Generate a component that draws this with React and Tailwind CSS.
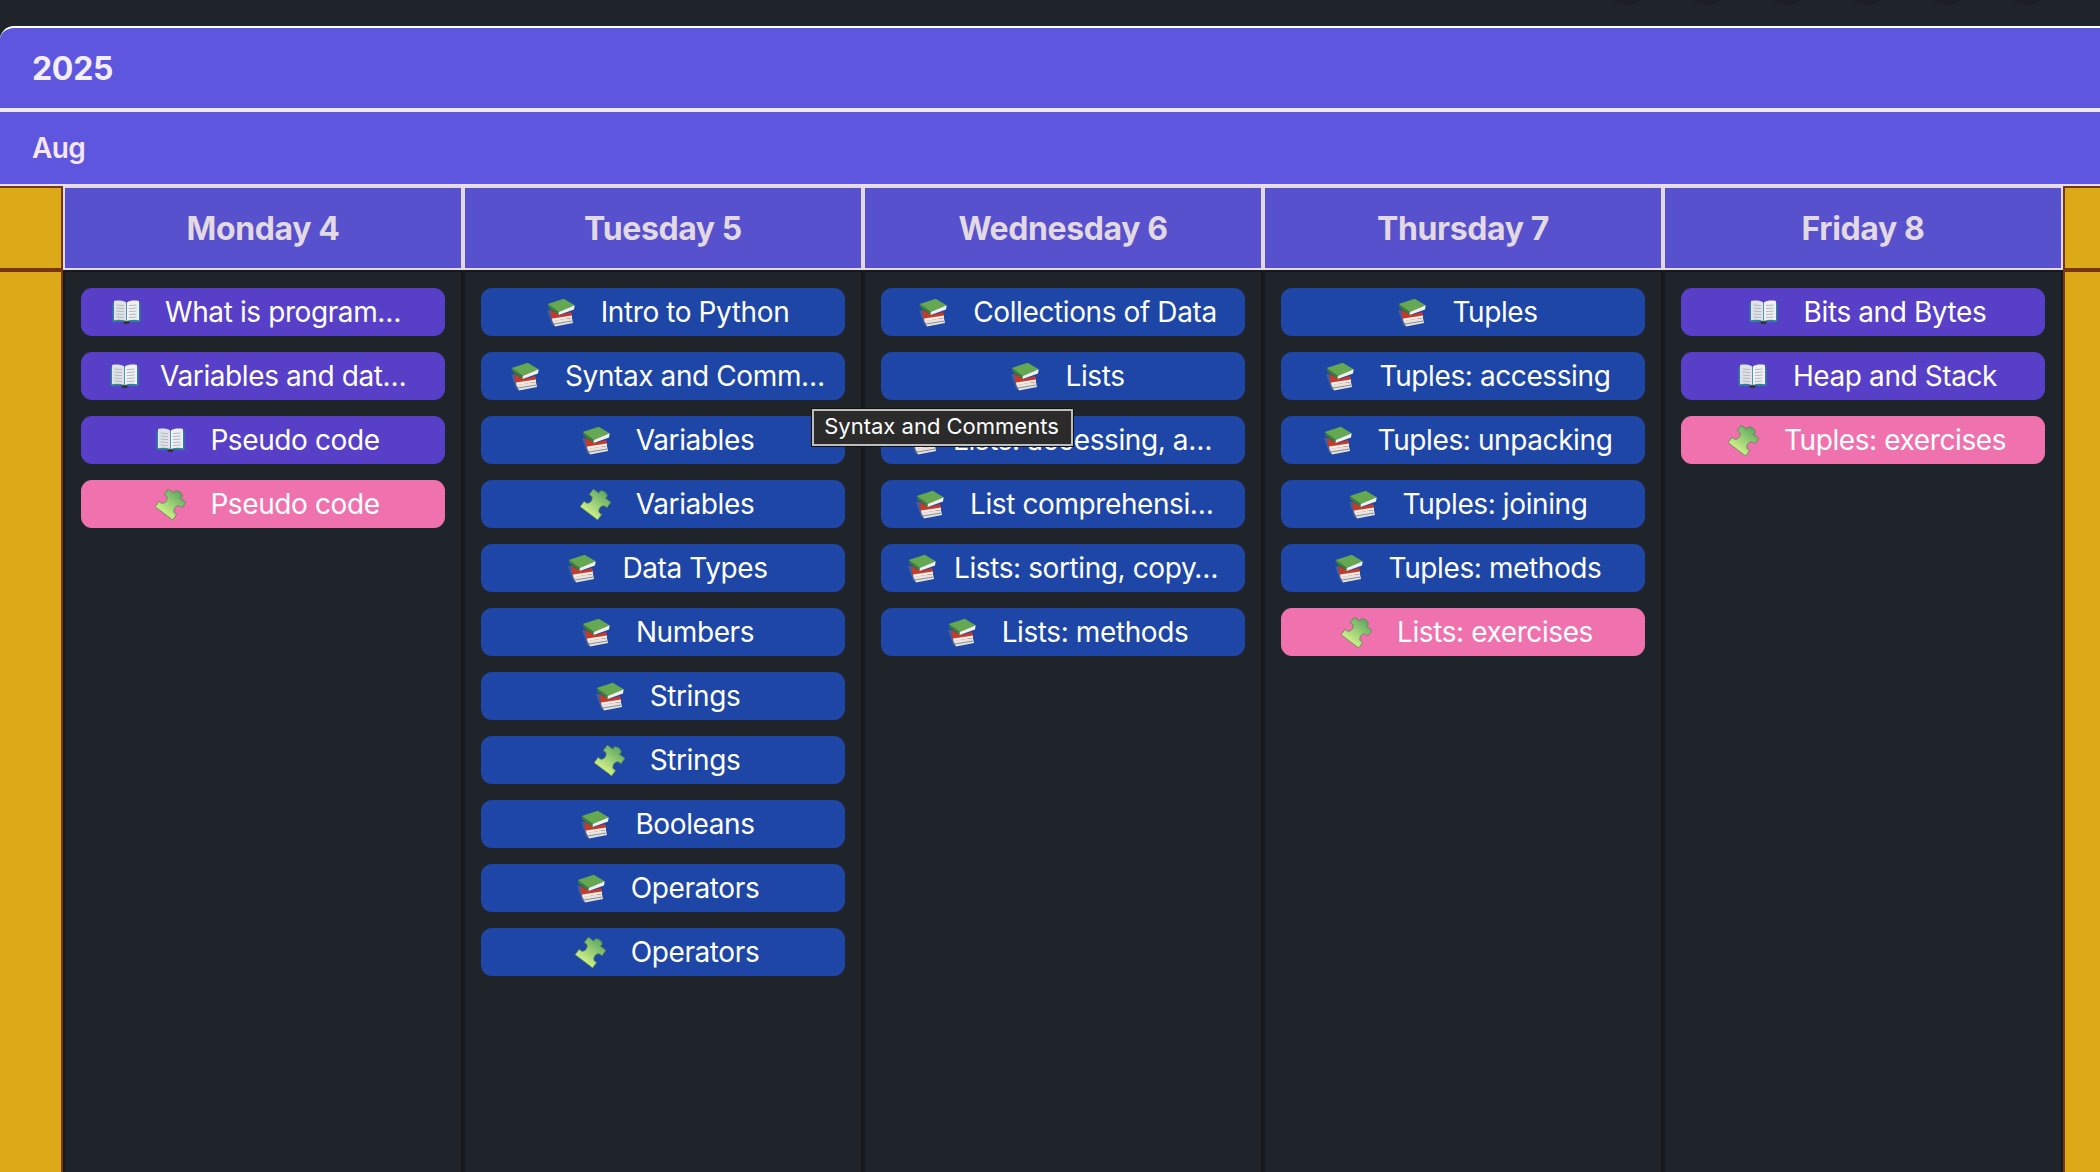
const BOOK = "book";
const BOOKS = "books";
const PUZZLE = "puzzle";

const cardColors = {
  purple: "bg-[#583fc8]",
  blue: "bg-[#1d46a7]",
  pink: "bg-[#ef72ae]",
};

const days = [
  {
    title: "Monday 4",
    items: [
      { icon: BOOK, label: "What is program…", color: "purple", gap: "mr-[24px]", box: "w-[259px]" },
      { icon: BOOK, label: "Variables and dat…", color: "purple", gap: "mr-[21px]", box: "w-[266px]" },
      { icon: BOOK, label: "Pseudo code", color: "purple" },
      { icon: PUZZLE, label: "Pseudo code", color: "pink" },
    ],
  },
  {
    title: "Tuesday 5",
    items: [
      { icon: BOOKS, label: "Intro to Python", color: "blue" },
      { icon: BOOKS, label: "Syntax and Comm…", color: "blue", box: "w-[260px]" },
      { icon: BOOKS, label: "Variables", color: "blue" },
      { icon: PUZZLE, label: "Variables", color: "blue" },
      { icon: BOOKS, label: "Data Types", color: "blue" },
      { icon: BOOKS, label: "Numbers", color: "blue" },
      { icon: BOOKS, label: "Strings", color: "blue" },
      { icon: PUZZLE, label: "Strings", color: "blue" },
      { icon: BOOKS, label: "Booleans", color: "blue" },
      { icon: BOOKS, label: "Operators", color: "blue" },
      { icon: PUZZLE, label: "Operators", color: "blue" },
    ],
  },
  {
    title: "Wednesday 6",
    items: [
      { icon: BOOKS, label: "Collections of Data", color: "blue" },
      { icon: BOOKS, label: "Lists", color: "blue" },
      { icon: BOOKS, label: "Lists: accessing, a…", color: "blue", gap: "mr-[14px]", box: "w-[273px]" },
      { icon: BOOKS, label: "List comprehensi…", color: "blue", box: "w-[250px]" },
      { icon: BOOKS, label: "Lists: sorting, copy…", color: "blue", gap: "mr-[17px]", box: "w-[274px]" },
      { icon: BOOKS, label: "Lists: methods", color: "blue" },
    ],
  },
  {
    title: "Thursday 7",
    items: [
      { icon: BOOKS, label: "Tuples", color: "blue" },
      { icon: BOOKS, label: "Tuples: accessing", color: "blue" },
      { icon: BOOKS, label: "Tuples: unpacking", color: "blue" },
      { icon: BOOKS, label: "Tuples: joining", color: "blue" },
      { icon: BOOKS, label: "Tuples: methods", color: "blue" },
      { icon: PUZZLE, label: "Lists: exercises", color: "pink" },
    ],
  },
  {
    title: "Friday 8",
    items: [
      { icon: BOOK, label: "Bits and Bytes", color: "purple" },
      { icon: BOOK, label: "Heap and Stack", color: "purple" },
      { icon: PUZZLE, label: "Tuples: exercises", color: "pink" },
    ],
  },
];

function BookIcon() {
  return (
    <svg width="29" height="24" viewBox="0 0 29 24" className="shrink-0">
      <path d="M0.5 3 L0.5 22 L12 22 L14.5 24 L17 22 L28.5 22 L28.5 3 Z" fill="#2f7f9f" />
      <path d="M2 1 C6.5 0 11.5 0.5 14.1 2.5 L14.1 21 C10.5 19.6 6.5 19.3 2 20.2 Z" fill="#dfe2e6" />
      <path d="M27 1 C22.5 0 17.5 0.5 14.9 2.5 L14.9 21 C18.5 19.6 22.5 19.3 27 20.2 Z" fill="#eef0f2" />
      <path d="M4.5 5 L12 5.6 M4.5 8 L12 8.6 M4.5 11 L12 11.6 M4.5 14 L12 14.6 M4.5 17 L12 17.6 M17 5.6 L24.5 5 M17 8.6 L24.5 8 M17 11.6 L24.5 11 M17 14.6 L24.5 14 M17 17.6 L24.5 17" stroke="#b4b8be" strokeWidth="1" />
      <path d="M11 21.5 L18 21.5 L16.5 24 L12.5 24 Z" fill="#3a3128" />
    </svg>
  );
}

function BooksIcon() {
  return (
    <svg width="28" height="29" viewBox="0 0 28 29" className="shrink-0">
      {/* bottom book */}
      <path d="M0 12 L5 12 L8 28 L5 27 Z" fill="#3f5f9a" />
      <path d="M5 22 L25 20 L26 25 L8 28.5 Z" fill="#e6e4de" />
      <path d="M7 25.5 L25.5 22.5 L25.5 23.5 L7 26.5 Z" fill="#8d8f96" />
      {/* red book */}
      <path d="M3 12 L13 17 L24 14 L25 17 L24.5 20 L5 23 Z" fill="#c73a2b" />
      <path d="M5 18 L24.5 15.5 L24.8 19.5 L5.5 22.5 Z" fill="#c73a2b" />
      <path d="M5 20.5 L25 17.5 L25 19.8 L5.5 23.2 Z" fill="#f1ede7" />
      {/* green book */}
      <path d="M0.7 6 L16.7 0.7 L27.7 7.3 L11.7 14 Z" fill="#66a851" />
      <path d="M0.7 6 L11.7 14 L11.7 17 L1.5 9.5 Z" fill="#3c7f35" />
      <path d="M11.7 14 L27.7 7.3 L27 11.5 L11.7 17 Z" fill="#f0f1e9" />
    </svg>
  );
}

function PuzzleIcon() {
  return (
    <svg width="31" height="31" viewBox="0 0 31 31" className="shrink-0">
      <defs>
        <linearGradient id="puzzle-fill" x1="0.5" y1="0" x2="0.5" y2="1">
          <stop offset="0" stopColor="#5fa862" />
          <stop offset="1" stopColor="#cdef88" />
        </linearGradient>
      </defs>
      {/* plain piece, tilted to sit like the emoji */}
      <path
        transform="rotate(37 15.5 15.5)"
        d="M4.5 4.5 L11.5 4.5 C10 2 12 0 15.5 0 C19 0 21 2 19.5 4.5 L26.5 4.5 L26.5 11.5 C24 10 21 12 21 15.5 C21 19 24 21 26.5 19.5 L26.5 26.5 L4.5 26.5 L4.5 19.5 C7 21 10 19 10 15.5 C10 12 7 10 4.5 11.5 Z"
        fill="url(#puzzle-fill)"
        stroke="#55824d"
        strokeWidth="0.7"
        strokeLinejoin="round"
      />
    </svg>
  );
}

function CardIcon({ icon }) {
  if (icon === BOOK) return <BookIcon />;
  if (icon === BOOKS) return <BooksIcon />;
  return <PuzzleIcon />;
}

function EventCard({ item }) {
  return (
    <div className={`flex h-12 items-center justify-center rounded-[11px] text-[28px] tracking-[-0.4px] text-white ${cardColors[item.color]}`}>
      <span className={`ml-[9px] flex w-[30px] justify-center ${item.gap || "mr-[25px]"}`}>
        <CardIcon icon={item.icon} />
      </span>
      <span className={`whitespace-nowrap ${item.box || ""}`}>{item.label}</span>
    </div>
  );
}

function DayColumn({ day }) {
  return (
    <div className="flex min-w-0 flex-1 flex-col">
      <div className="flex h-[84px] shrink-0 items-center justify-center border-x-2 border-y-2 border-[#e2d9e3] bg-[#5851cd] pt-[2px] text-[32px] font-bold tracking-[-0.4px] text-[#e2d9e3]">
        {day.title}
      </div>
      <div className="flex flex-1 flex-col gap-4 border-x-2 border-t-2 border-[#18191c] p-4">
        {day.items.map((item, i) => (
          <EventCard key={i} item={item} />
        ))}
      </div>
    </div>
  );
}

function Gutter({ side }) {
  const edge = side === "left" ? "w-[63px] border-r-2" : "w-[37px] border-l-2";
  return (
    <div className={`flex shrink-0 flex-col border-[#78350f] ${edge}`}>
      <div className="h-[86px] shrink-0 border-t-2 border-b-4 border-[#78350f] bg-[#dcaa18]" />
      <div className="flex-1 bg-[#dcaa18]" />
    </div>
  );
}

export default function App() {
  return (
    <div className="relative flex h-[1172px] flex-col overflow-hidden bg-[#1f232a] font-['Inter',sans-serif]">
      <div className="flex h-[26px] shrink-0 items-end justify-end gap-10 pr-[53px]">
        {[0, 1, 2, 3, 4, 5].map((n) => (
          <div key={n} className="mb-[21px] h-10 w-10 shrink-0 rounded-full bg-[#1b1e24]" />
        ))}
      </div>
      <div className="flex h-[86px] shrink-0 items-center rounded-tl-[14px] border-t-2 border-b-4 border-t-white border-b-[#f0e8f5] bg-[#5e56de] pl-8 pt-[2px] text-[32px] font-bold tracking-[-0.3px] text-[#f3eefa]">
        2025
      </div>
      <div className="flex h-[72px] shrink-0 items-center bg-[#5e56de] pl-8 text-[28px] font-semibold tracking-[-0.6px] text-[#f5e6f2]">
        Aug
      </div>
      <div className="h-[2px] shrink-0 bg-[#e8dfea]" />
      <div className="flex min-h-0 flex-1">
        <Gutter side="left" />
        <div className="flex min-w-0 flex-1">
          {days.map((day) => (
            <DayColumn key={day.title} day={day} />
          ))}
        </div>
        <Gutter side="right" />
      </div>
      <div className="absolute left-[812px] top-[409px] flex h-[37px] w-[261px] items-center justify-center border-2 border-[#bdbdbd] bg-[#2b2b2b] pb-[2px] pr-[2px] text-[22px] text-white shadow-[0_0_0_1px_#111]">
        Syntax and Comments
      </div>
    </div>
  );
}
